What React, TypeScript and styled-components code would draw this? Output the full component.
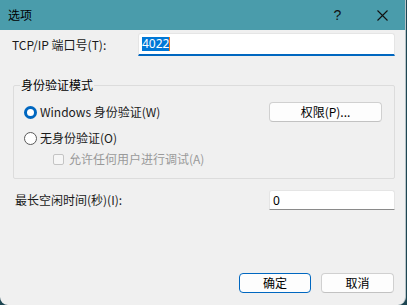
import styled, { createGlobalStyle } from "styled-components";

const GlobalStyle = createGlobalStyle`
  html, body {
    margin: 0;
    padding: 0;
    background: #1d4652;
  }
  body {
    font-family: "Noto Sans CJK SC", "Noto Sans", "Liberation Sans", sans-serif;
    font-size: 12px;
    color: #1a1a1a;
  }
`;

const Window = styled.div`
  width: 406px;
  height: 305px;
  background: #f0f0f0;
  border-right: 1px solid #b8c4c8;
  border-radius: 0 0 8px 8px;
  display: flex;
  flex-direction: column;
  overflow: hidden;
  box-sizing: border-box;
`;

const TitleBar = styled.div`
  height: 30px;
  flex: none;
  background: #4a9cab;
  display: flex;
  align-items: center;
  padding-left: 8px;
  color: #000;
`;

const Title = styled.span`
  flex: 1;
  line-height: 16px;
`;

const TitleButton = styled.div`
  width: 45px;
  height: 30px;
  display: flex;
  align-items: center;
  justify-content: center;
  font-size: 14px;
  font-family: "Liberation Sans", sans-serif;
  color: #111;
`;

const Body = styled.div`
  flex: 1;
  display: flex;
  flex-direction: column;
  padding: 3px 10px 12px 12px;
`;

const FieldRow = styled.div`
  display: flex;
  align-items: center;
  justify-content: space-between;
  height: 23px;
`;

const Label = styled.span`
  line-height: 16px;
  white-space: nowrap;
`;

const TextBox = styled.div<{ $width: number; $focused?: boolean }>`
  width: ${({ $width }) => $width}px;
  height: ${({ $focused }) => ($focused ? 23 : 20)}px;
  box-sizing: border-box;
  background: #fff;
  border: 1px solid #e5e5e5;
  border-bottom: ${({ $focused }) => ($focused ? "2px solid #0067c0" : "1px solid #8a8a8a")};
  border-radius: 3px 3px 0 0;
  display: flex;
  align-items: center;
  padding-left: 3px;
  font-family: "Noto Sans", "Liberation Sans", sans-serif;
  font-size: 12px;
  color: #000;
`;

const Selected = styled.span`
  background: #0078d7;
  color: #fff;
  line-height: 14px;
  border-right: 1px solid #f07a1a;
`;

const Group = styled.fieldset`
  margin: 21px 0 0 1px;
  padding: 9px 12px 9px 10px;
  border: 1px solid #dcdcdc;
  border-radius: 2px;
  display: flex;
  flex-direction: column;
`;

const Legend = styled.legend`
  padding: 0 1px;
  margin-left: -4px;
  line-height: 16px;
  color: #000;
`;

const OptionRow = styled.div<{ $gap?: number }>`
  display: flex;
  align-items: center;
  height: 20px;
  margin-top: ${({ $gap }) => $gap ?? 0}px;
`;

const OptionLabel = styled.label<{ $disabled?: boolean }>`
  display: flex;
  align-items: center;
  gap: 3px;
  flex: 1;
  line-height: 16px;
  color: ${({ $disabled }) => ($disabled ? "#9a9a9a" : "#1a1a1a")};
`;

const Radio = styled.span<{ $checked?: boolean }>`
  width: 13px;
  height: 13px;
  box-sizing: border-box;
  border-radius: 50%;
  flex: none;
  border: ${({ $checked }) => ($checked ? "3.5px solid #0067c0" : "1px solid #5a5a5a")};
  background: #fff;
`;

const CheckBox = styled.span`
  width: 11px;
  height: 11px;
  box-sizing: border-box;
  border: 1px solid #c4c4c4;
  border-radius: 2px;
  background: #f6f6f6;
  flex: none;
  margin-left: 29px;
  margin-right: 2px;
`;

const Button = styled.button<{ $primary?: boolean; $width: number }>`
  width: ${({ $width }) => $width}px;
  height: 20px;
  box-sizing: border-box;
  padding: 0;
  font: inherit;
  color: #000;
  background: #fdfdfd;
  border: 1px solid ${({ $primary }) => ($primary ? "#0067c0" : "#d0d0d0")};
  border-bottom-color: ${({ $primary }) => ($primary ? "#0067c0" : "#c2c2c2")};
  border-radius: 4px;
  line-height: 16px;
`;

const IdleRow = styled(FieldRow)`
  margin-top: 11px;
  height: 20px;
  padding-left: 3px;
`;

const Footer = styled.div`
  margin-top: auto;
  display: flex;
  justify-content: flex-end;
  gap: 10px;
  padding-right: 1px;
`;

export default function App() {
  return (
    <>
      <GlobalStyle />
      <Window>
        <TitleBar>
          <Title>选项</Title>
          <TitleButton>?</TitleButton>
          <TitleButton>
            <svg width="11" height="11" viewBox="0 0 11 11">
              <path d="M0.5 0.5L10.5 10.5M10.5 0.5L0.5 10.5" stroke="#111" strokeWidth="1.1" fill="none" />
            </svg>
          </TitleButton>
        </TitleBar>
        <Body>
          <FieldRow>
            <Label>TCP/IP 端口号(T):</Label>
            <TextBox $width={257} $focused>
              <Selected>4022</Selected>
            </TextBox>
          </FieldRow>

          <Group>
            <Legend>身份验证模式</Legend>
            <OptionRow>
              <OptionLabel>
                <Radio $checked />
                Windows 身份验证(W)
              </OptionLabel>
              <Button $width={113}>权限(P)...</Button>
            </OptionRow>
            <OptionRow $gap={6}>
              <OptionLabel>
                <Radio />
                无身份验证(O)
              </OptionLabel>
            </OptionRow>
            <OptionRow $gap={1}>
              <OptionLabel $disabled>
                <CheckBox />
                允许任何用户进行调试(A)
              </OptionLabel>
            </OptionRow>
          </Group>

          <IdleRow>
            <Label>最长空闲时间(秒)(I):</Label>
            <TextBox $width={126}>0</TextBox>
          </IdleRow>

          <Footer>
            <Button $primary $width={72}>确定</Button>
            <Button $width={73}>取消</Button>
          </Footer>
        </Body>
      </Window>
    </>
  );
}
